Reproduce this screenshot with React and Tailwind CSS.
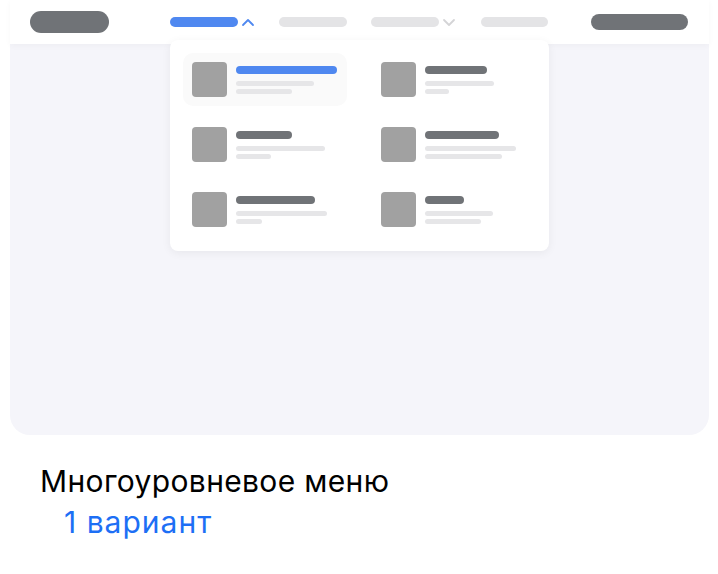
import React from 'react'

// заглушки строк в выпадающем меню: [заголовок, строка 1, строка 2]
const ITEMS = [
  { w: [101, 78, 56], active: true },
  { w: [62, 69, 24] },
  { w: [56, 89, 35] },
  { w: [74, 91, 77] },
  { w: [79, 91, 26] },
  { w: [39, 68, 56] },
]

function Chevron({ up, className }) {
  return (
    <svg width="14" height="10" viewBox="0 0 14 10" fill="none" className={className}>
      <path
        d={up ? 'M2 8 L7 3 L12 8' : 'M2 3 L7 8 L12 3'}
        stroke="currentColor"
        strokeWidth="1.8"
        strokeLinecap="round"
        strokeLinejoin="round"
      />
    </svg>
  )
}

function MenuItem({ w, active }) {
  return (
    <div className={`flex items-center gap-[9px] p-[9px] rounded-[10px] ${active ? 'bg-[#fafafa]' : ''}`}>
      <div className="w-[35px] h-[35px] rounded-[4px] bg-[#a1a1a1] shrink-0" />
      <div className="flex flex-col">
        <div
          className={`h-[8px] rounded-full ${active ? 'bg-[#4f88f0]' : 'bg-[#707377]'}`}
          style={{ width: w[0] }}
        />
        <div className="h-[5px] rounded-full bg-[#e6e6e8] mt-[7px]" style={{ width: w[1] }} />
        <div className="h-[5px] rounded-full bg-[#e6e6e8] mt-[3px]" style={{ width: w[2] }} />
      </div>
    </div>
  )
}

export default function App() {
  return (
    <div className="w-[718px] h-[574px] bg-white font-['Liberation_Sans',Arial,sans-serif] overflow-hidden">
      <div className="mx-[10px] w-[699px] relative">
        {/* шапка */}
        <div className="h-[44px] bg-white flex items-center pl-[20px] pr-[21px] relative z-10 shadow-[0_2px_6px_rgba(0,0,0,0.03)]">
          <div className="w-[79px] h-[22px] rounded-full bg-[#707377]" />
          <div className="flex items-center ml-[61px]">
            <div className="flex items-center relative">
              <div className="w-[68px] h-[10px] rounded-full bg-[#4f88f0]" />
              <Chevron up className="ml-[3px] text-[#4f88f0]" />
              {/* выпадающее меню */}
              <div className="absolute left-0 top-[23px] w-[379px] bg-white rounded-[8px] shadow-[0_2px_10px_rgba(0,0,0,0.06)] px-[13px] pt-[13px] pb-[15px] grid grid-cols-2 gap-x-[25px] gap-y-[12px]">
                {ITEMS.map((it, i) => (
                  <MenuItem key={i} {...it} />
                ))}
              </div>
            </div>
            <div className="w-[68px] h-[10px] rounded-full bg-[#e4e4e6] ml-[24px]" />
            <div className="flex items-center ml-[24px]">
              <div className="w-[68px] h-[10px] rounded-full bg-[#e4e4e6]" />
              <Chevron className="ml-[3px] text-[#d4d4d6]" />
            </div>
            <div className="w-[67px] h-[10px] rounded-full bg-[#e4e4e6] ml-[25px]" />
          </div>
          <div className="ml-auto w-[97px] h-[16px] rounded-full bg-[#707377]" />
        </div>
        {/* тело */}
        <div className="h-[391px] bg-[#f5f5fa] rounded-b-[20px]" />
      </div>

      <div className="pl-[40px] pt-[26px] font-['Inter',sans-serif] text-[30px] leading-[41px] tracking-[0.35px]">
        <div className="text-black">Многоуровневое меню</div>
        <div className="text-[#1d6ff5] pl-[24px] tracking-[1px]">1 вариант</div>
      </div>
    </div>
  )
}
